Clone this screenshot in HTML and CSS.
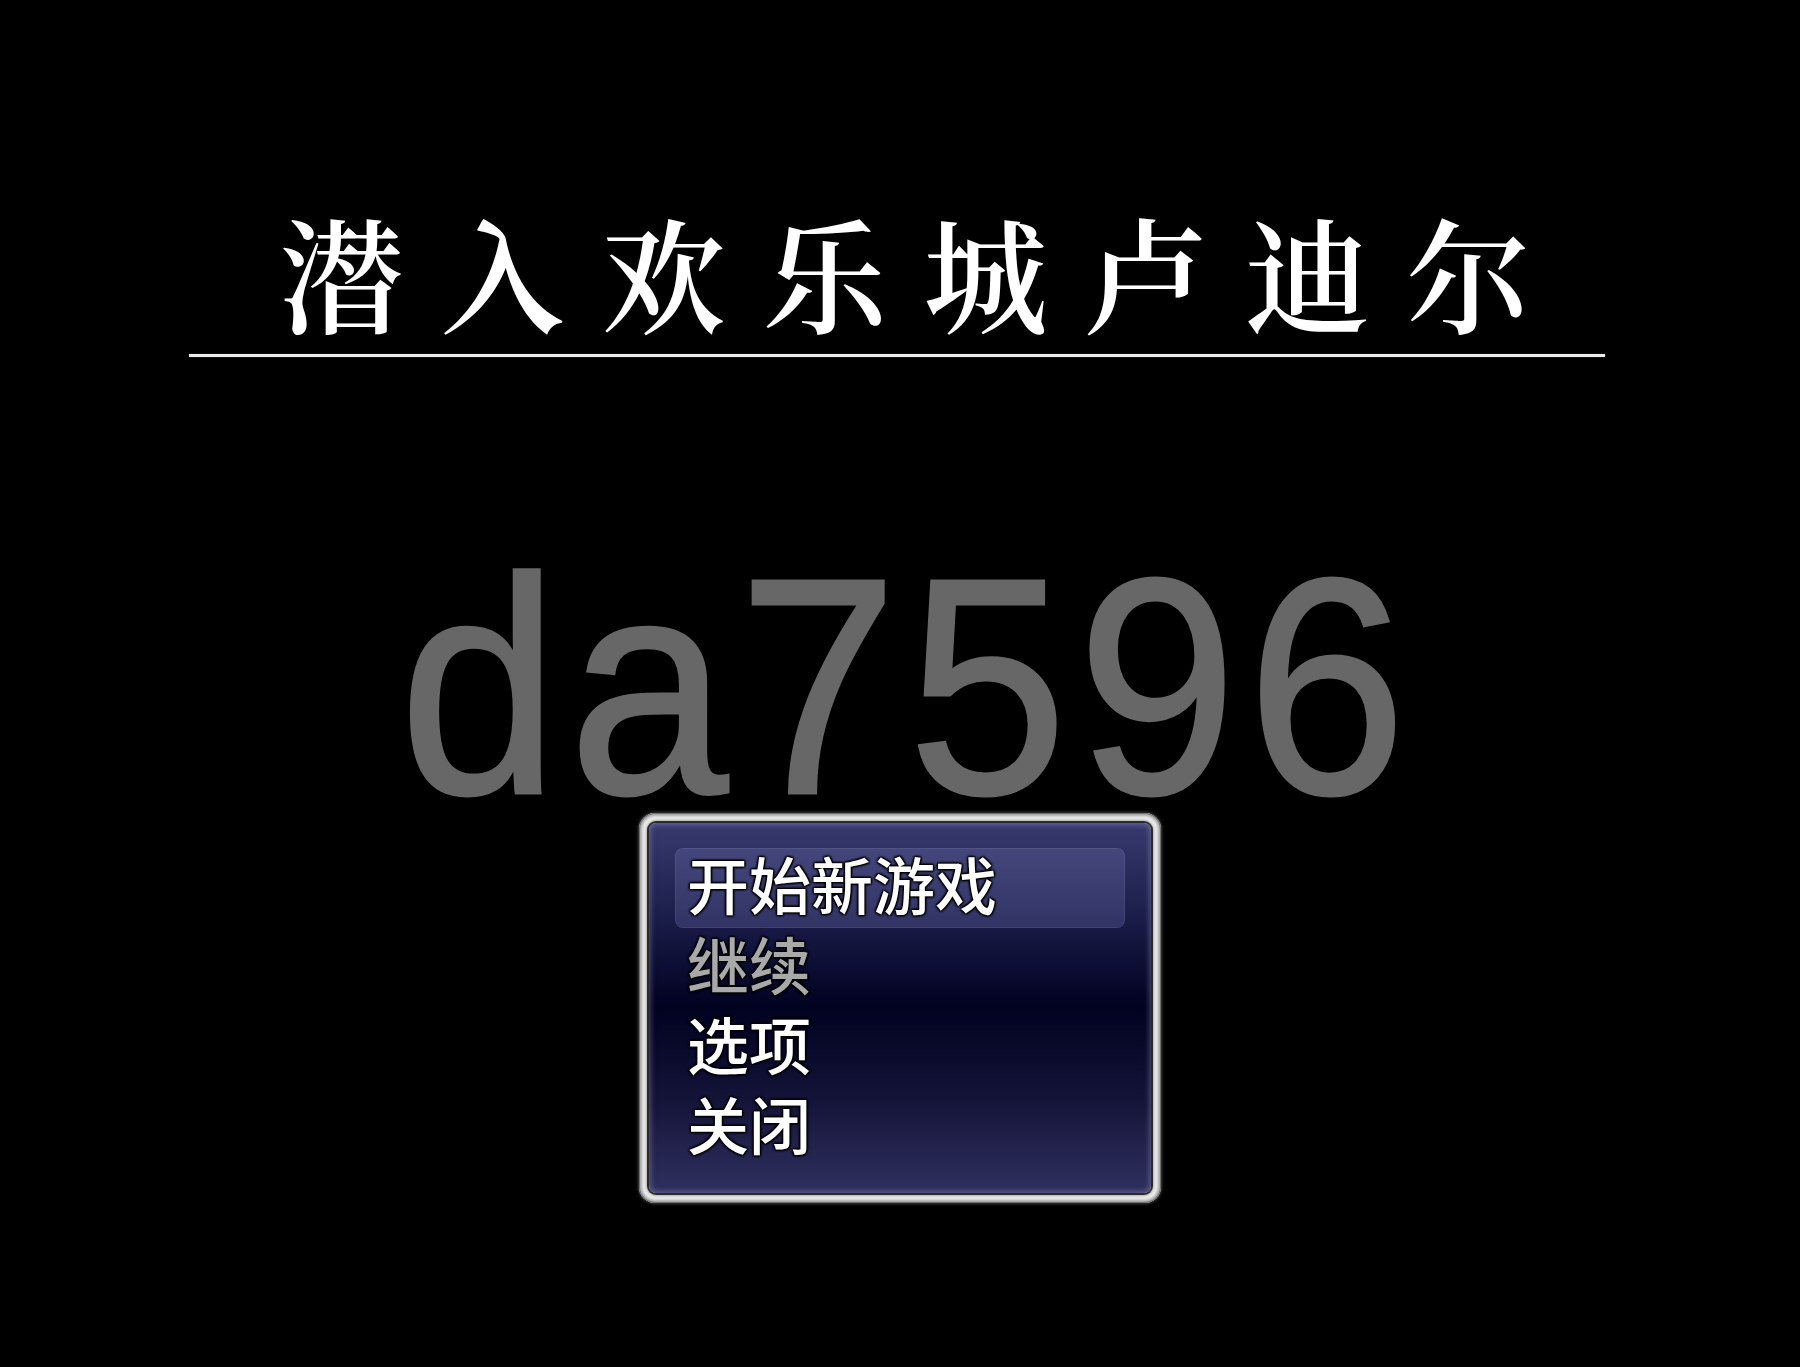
FILE: index.html
```html
<!DOCTYPE html>
<html lang="zh-CN">
<head>
<meta charset="utf-8">
<title>潜入欢乐城卢迪尔</title>
<link rel="stylesheet" href="styles.css">
</head>
<body>
<div class="screen">
  <header class="title-wrap">
    <h1 class="title">潜入欢乐城卢迪尔</h1>
    <div class="rule"></div>
  </header>
  <div class="watermark">da7596</div>
  <div class="window">
    <div class="panel">
      <ul class="menu">
        <li class="item selected">开始新游戏</li>
        <li class="item disabled">继续</li>
        <li class="item">选项</li>
        <li class="item">关闭</li>
      </ul>
    </div>
  </div>
</div>
</body>
</html>
```
FILE: styles.css
```css
html, body {
  margin: 0;
  padding: 0;
  background: #000;
}
.screen {
  width: 1800px;
  height: 1367px;
  background: #000;
  overflow: hidden;
}
.title-wrap {
  width: 1416px;
  margin: 0 0 0 189px;
  padding-top: 208px;
}
.title {
  margin: 0;
  font-family: "Noto Serif CJK SC", "Noto Sans CJK SC", serif;
  font-weight: 600;
  font-size: 124px;
  line-height: 124px;
  letter-spacing: 37px;
  padding-left: 53px;
  color: #fff;
  text-align: center;
}
.rule {
  height: 3px;
  margin-top: 22px;
  background: #ececec;
  box-shadow: 0 0 1px rgba(255,255,255,.6);
}
.watermark {
  margin-top: 197px;
  margin-bottom: -5px;
  height: 264px;
  font-family: "Liberation Sans", Arial, sans-serif;
  font-size: 308px;
  line-height: 264px;
  letter-spacing: 11px;
  color: #676767;
  -webkit-text-stroke: 3px #676767;
  text-align: center;
  padding-left: 17px;
  transform: scaleX(0.93);
}
.window {
  box-sizing: border-box;
  width: 522px;
  height: 390px;
  margin: 0 auto;
  padding: 10px;
  border-radius: 16px;
  background: #f2f2f2;
  box-shadow:
    0 0 3px 1px rgba(90,90,90,.7),
    inset 0 0 0 1px #6f6f6f,
    inset 0 0 3px 3px #a0a0a0;
}
.panel {
  box-sizing: border-box;
  height: 100%;
  padding: 25px 26px;
  border-radius: 7px;
  background: linear-gradient(#383a6e 0%, #1b1d4a 25%, #010120 50%, #141439 75%, #303060 100%);
  box-shadow:
    0 0 0 2px #2b2b2b,
    0 0 3px 3px rgba(120,120,120,.6),
    inset 0 0 5px 2px rgba(170,170,210,.35);
}
.menu {
  list-style: none;
  margin: 0;
  padding: 0;
}
.item {
  height: 70px;
  padding: 0 0 10px 12px;
  font-family: "Noto Sans CJK SC", sans-serif;
  font-weight: 500;
  font-size: 62px;
  line-height: 70px;
  color: #fff;
  border-radius: 8px;
  text-shadow:
    0 0 3px rgba(0,0,0,.9),
    1px 1px 2px #000,
    -1px -1px 2px #000,
    1px -1px 2px #000,
    -1px 1px 2px #000;
}
.item.selected {
  background: rgba(140,145,210,.22);
  box-shadow: inset 0 0 0 1px rgba(255,255,255,.07);
}
.item.disabled {
  color: #a9a9a9;
}
```
